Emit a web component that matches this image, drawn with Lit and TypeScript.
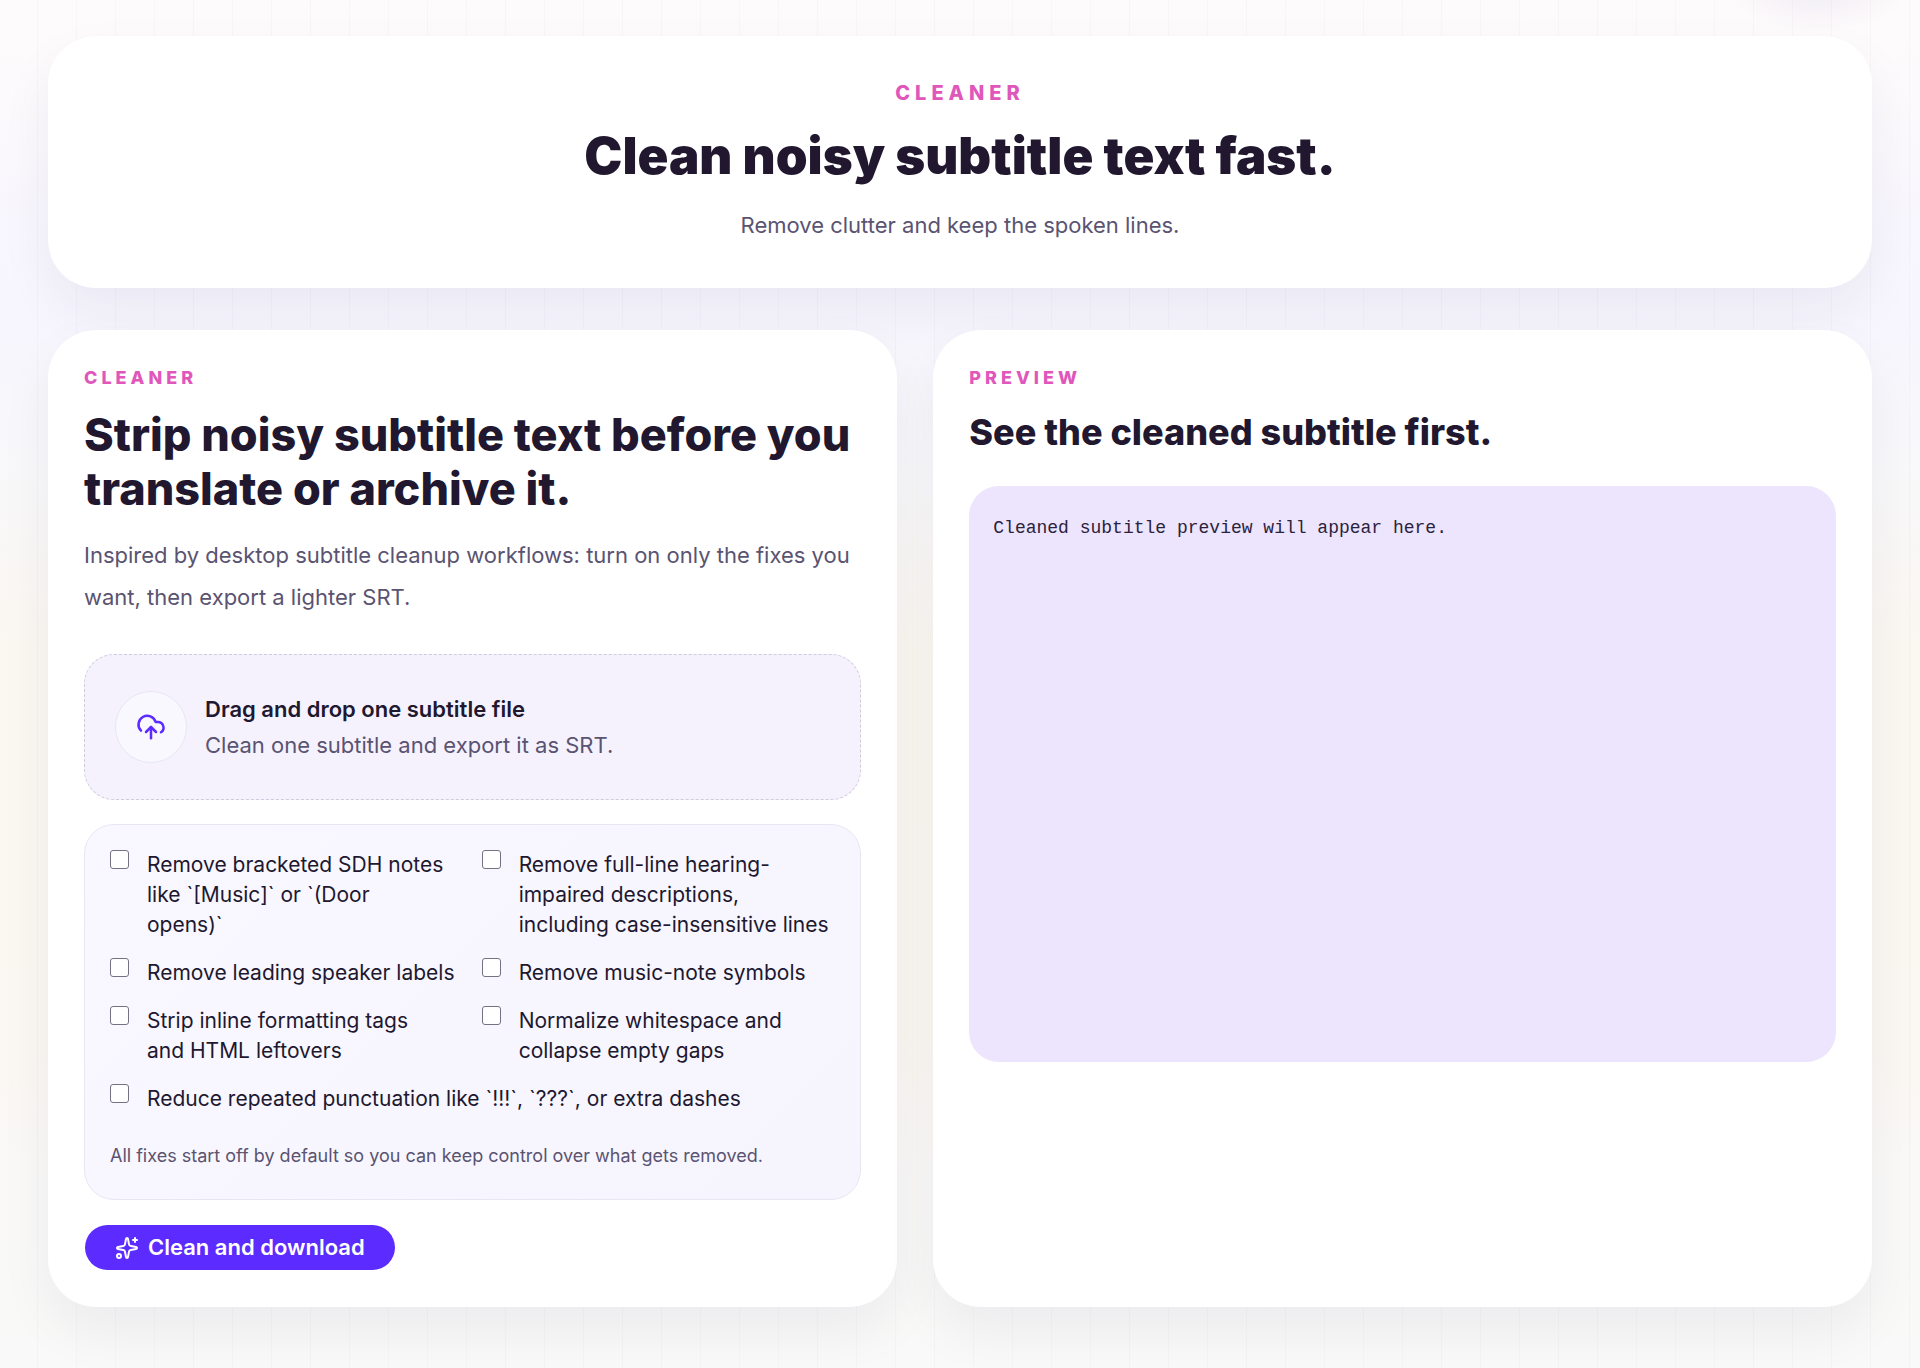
import { LitElement, html, css, svg } from "lit";
import { customElement, state } from "lit/decorators.js";

interface Fix {
  id: string;
  lines: string[];
  wide?: boolean;
}

const FIXES: Fix[] = [
  { id: "sdh", lines: ["Remove bracketed SDH notes", "like `[Music]` or `(Door", "opens)`"] },
  { id: "hearing", lines: ["Remove full-line hearing-", "impaired descriptions,", "including case-insensitive lines"] },
  { id: "speaker", lines: ["Remove leading speaker labels"] },
  { id: "music", lines: ["Remove music-note symbols"] },
  { id: "tags", lines: ["Strip inline formatting tags", "and HTML leftovers"] },
  { id: "space", lines: ["Normalize whitespace and", "collapse empty gaps"] },
  { id: "punct", lines: ["Reduce repeated punctuation like `!!!`, `???`, or extra dashes"], wide: true },
];

const cloudUpload = svg`
  <path d="M4 14.899A7 7 0 1 1 15.71 8h1.79a4.5 4.5 0 0 1 2.5 8.242" />
  <path d="M12 12v9" />
  <path d="m16 16-4-4-4 4" />`;

const sparkles = svg`
  <path d="M11.017 2.814a1 1 0 0 1 1.966 0l1.051 5.558a2 2 0 0 0 1.594 1.594l5.558 1.051a1 1 0 0 1 0 1.966l-5.558 1.051a2 2 0 0 0-1.594 1.594l-1.051 5.558a1 1 0 0 1-1.966 0l-1.051-5.558a2 2 0 0 0-1.594-1.594l-5.558-1.051a1 1 0 0 1 0-1.966l5.558-1.051a2 2 0 0 0 1.594-1.594z" />
  <path d="M20 2v4" />
  <path d="M22 4h-4" />
  <circle cx="4" cy="20" r="2" />`;

@customElement("app-root")
export class AppRoot extends LitElement {
  static styles = css`
    :host {
      display: block;
      box-sizing: border-box;
      min-height: 100vh;
      padding: 36px 48px 60px;
      color: #21182f;
      font-family: Inter, "Open Sans", sans-serif;
      font-size: 22px;
      background:
        radial-gradient(90px 40px at calc(100% - 103px) -8px, rgba(60, 50, 160, 0.07), rgba(60, 50, 120, 0.02) 70%, transparent),
        repeating-linear-gradient(90deg, transparent 0 38px, rgba(33, 24, 60, 0.022) 38px 39px) -1px 0,
        linear-gradient(180deg, #fefbfc 0, #fdfafd 7%, #f8f6fe 17%, #f7f6fe 24%, #f9f8f9 36%, #fbf7f1 48%, #fbf7f2 76%, #faf9f8 86%, #f9f9f9 100%);
    }
    *,
    *::before,
    *::after {
      box-sizing: border-box;
    }
    h1,
    h2,
    h3,
    p,
    pre {
      margin: 0;
    }
    .page {
      display: grid;
      gap: 42px;
    }
    .card {
      border-radius: 48px;
      background: #fff;
      box-shadow: 0 24px 54px rgba(33, 24, 47, 0.06);
    }
    .hero {
      display: flex;
      flex-direction: column;
      align-items: center;
      padding: 42px 36px;
      text-align: center;
    }
    .eyebrow {
      color: #df57bb;
      font-size: 18px;
      font-weight: 800;
      letter-spacing: 4px;
      line-height: 24px;
      text-transform: uppercase;
    }
    .hero .eyebrow {
      font-size: 20px;
      letter-spacing: 5px;
      line-height: 30px;
    }
    h1 {
      margin-top: 18px;
      font-size: 51px;
      font-weight: 900;
      line-height: 60px;
    }
    .lead {
      color: #5a5371;
      line-height: 42px;
    }
    .hero .lead {
      margin-top: 18px;
    }
    .columns {
      display: grid;
      grid-template-columns: minmax(0, 19fr) minmax(0, 21fr);
      gap: 36px;
    }
    .panel {
      padding: 36px;
    }
    h2 {
      margin: 18px 0;
      font-size: 45px;
      font-weight: 800;
      line-height: 54px;
    }
    h3 {
      margin: 18px 0 30px;
      font-size: 36px;
      font-weight: 800;
      line-height: 48px;
    }
    .drop {
      display: flex;
      align-items: center;
      gap: 18px;
      width: 100%;
      margin: 36px 0 24px;
      padding: 36px 30px;
      border: 1px dashed #cfcbdc;
      border-radius: 30px;
      background: #f5f2fe;
      color: inherit;
      font: inherit;
      line-height: 36px;
      text-align: left;
      cursor: pointer;
    }
    .badge {
      display: grid;
      flex: none;
      place-items: center;
      width: 72px;
      height: 72px;
      border: 1px solid #e9e6f4;
      border-radius: 50%;
      background: #f9f8ff;
      color: #5b2bff;
    }
    .drop-text {
      display: grid;
    }
    .drop-title {
      font-weight: 600;
    }
    .drop-hint {
      color: #5a5371;
    }
    svg {
      display: block;
      flex: none;
      fill: none;
      stroke: currentColor;
      stroke-width: 2;
      stroke-linecap: round;
      stroke-linejoin: round;
    }
    .fixes {
      padding: 25px;
      border: 1px solid #e9e6f4;
      border-radius: 30px;
      background: linear-gradient(135deg, #f9f7ff, #f6f5fe);
    }
    .fix-grid {
      display: grid;
      grid-template-columns: repeat(2, minmax(0, 1fr));
      gap: 18px;
    }
    .fix {
      display: flex;
      align-items: flex-start;
      gap: 18px;
      font-size: 21px;
      line-height: 30px;
    }
    .fix-wide {
      grid-column: 1 / -1;
    }
    .box {
      appearance: none;
      flex: none;
      width: 19px;
      height: 19px;
      margin: 0;
      border: 1px solid #767083;
      border-radius: 3px;
      background: #fff;
    }
    .box:checked {
      border-color: #5b2bff;
      background: #5b2bff;
    }
    .note {
      margin-top: 24px;
      color: #5a5371;
      font-size: 18px;
      line-height: 36px;
    }
    .action {
      display: flex;
      align-items: center;
      gap: 9px;
      margin-top: 24px;
      padding: 0 30px;
      border: 1px solid transparent;
      border-radius: 24px;
      background: #5b2bff;
      background-clip: padding-box;
      color: #fff;
      font-family: inherit;
      font-size: 22px;
      font-weight: 600;
      line-height: 45px;
      cursor: pointer;
    }
    .preview {
      min-height: 576px;
      padding: 24px;
      border-radius: 30px;
      background: #ede5fe;
      color: #2c223c;
      font-family: "Liberation Mono", monospace;
      font-size: 18px;
      line-height: 36px;
      white-space: pre-wrap;
    }
    @media (max-width: 1100px) {
      .columns {
        grid-template-columns: minmax(0, 1fr);
      }
    }
  `;

  @state() private enabled = new Set<string>();

  private toggle(id: string) {
    const next = new Set(this.enabled);
    if (!next.delete(id)) next.add(id);
    this.enabled = next;
  }

  private renderFix(fix: Fix) {
    return html`<label class="fix ${fix.wide ? "fix-wide" : ""}">
      <input
        class="box"
        type="checkbox"
        .checked=${this.enabled.has(fix.id)}
        @change=${() => this.toggle(fix.id)}
      />
      <span>${fix.lines.map((line, i) => (i ? html`<br />${line}` : line))}</span>
    </label>`;
  }

  render() {
    return html`<main class="page">
      <header class="card hero">
        <p class="eyebrow">Cleaner</p>
        <h1>Clean noisy subtitle text fast.</h1>
        <p class="lead">Remove clutter and keep the spoken lines.</p>
      </header>
      <div class="columns">
        <section class="card panel">
          <p class="eyebrow">Cleaner</p>
          <h2>Strip noisy subtitle text before you translate or archive it.</h2>
          <p class="lead">
            Inspired by desktop subtitle cleanup workflows: turn on only the fixes you want, then export a lighter SRT.
          </p>
          <button class="drop" type="button">
            <span class="badge"><svg width="30" height="30" viewBox="0 0 24 24" aria-hidden="true">${cloudUpload}</svg></span>
            <span class="drop-text">
              <span class="drop-title">Drag and drop one subtitle file</span>
              <span class="drop-hint">Clean one subtitle and export it as SRT.</span>
            </span>
          </button>
          <div class="fixes">
            <div class="fix-grid">${FIXES.map((fix) => this.renderFix(fix))}</div>
            <p class="note">All fixes start off by default so you can keep control over what gets removed.</p>
          </div>
          <button class="action" type="button">
            <svg width="24" height="24" viewBox="0 0 24 24" aria-hidden="true">${sparkles}</svg>
            Clean and download
          </button>
        </section>
        <section class="card panel">
          <p class="eyebrow">Preview</p>
          <h3>See the cleaned subtitle first.</h3>
          <pre class="preview">Cleaned subtitle preview will appear here.</pre>
        </section>
      </div>
    </main>`;
  }
}
